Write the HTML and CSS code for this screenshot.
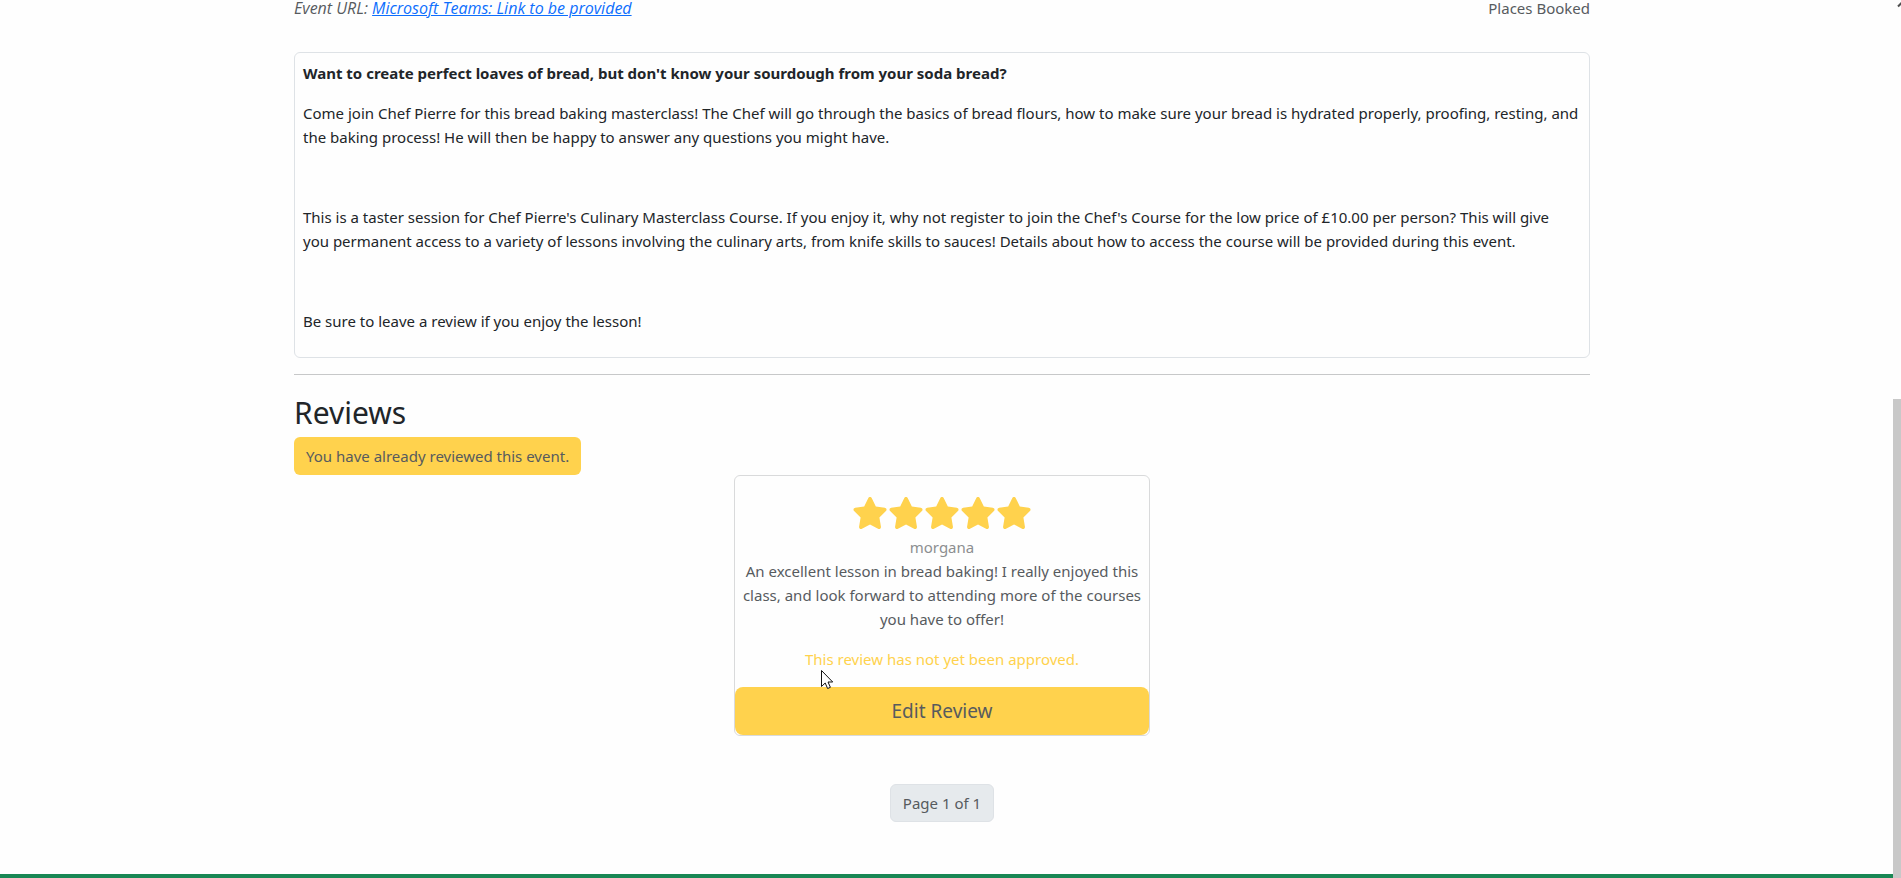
FILE: index.html
```html
<!DOCTYPE html>
<html lang="en">
<head>
<meta charset="utf-8">
<meta name="viewport" content="width=device-width, initial-scale=1">
<title>Bread Baking Masterclass</title>
<link rel="stylesheet" href="styles.css">
</head>
<body>
<svg class="sprite" aria-hidden="true">
  <symbol id="star" viewBox="0 0 576 512">
    <path d="M316.900 18C311.600 7 300.400 0 288.100 0s-23.400 7-28.800 18L195 150.300 51.400 171.500c-12 1.800-22 10.200-25.700 21.700s-.7 24.200 7.900 32.700L137.800 329 113.200 474.700c-2 12 3 24.200 12.900 31.300s23 8 33.800 2.300l128.300-68.500 128.300 68.500c10.800 5.700 23.900 4.900 33.800-2.300s14.900-19.300 12.900-31.300L438.500 329 542.700 225.900c8.600-8.500 11.700-21.200 7.900-32.700s-13.700-19.900-25.700-21.700L381.200 150.300 316.900 18z"/>
  </symbol>
</svg>
<div class="page">
  <main class="container">
    <div class="event-meta">
      <em>Event URL: <a href="#">Microsoft Teams: Link to be provided</a></em>
      <span>Places Booked</span>
    </div>
    <section class="description">
      <p><strong>Want to create perfect loaves of bread, but don't know your sourdough from your soda bread?</strong></p>
      <p>Come join Chef Pierre for this bread baking masterclass! The Chef will go through the basics of bread flours, how to make sure your bread is hydrated properly, proofing, resting, and the baking process! He will then be happy to answer any questions you might have.</p>
      <p>&nbsp;</p>
      <p>This is a taster session for Chef Pierre's Culinary Masterclass Course. If you enjoy it, why not register to join the Chef's Course for the low price of £10.00 per person? This will give you&nbsp;permanent access to a variety of lessons involving the culinary arts, from knife skills to sauces! Details about how to access the course will be provided during this event.</p>
      <p>&nbsp;</p>
      <p>Be sure to leave a review if you enjoy the lesson!</p>
    </section>
    <hr class="divider">
    <section class="reviews">
      <h2>Reviews</h2>
      <button class="btn" type="button">You have already reviewed this event.</button>
      <article class="review">
        <div class="stars" role="img" aria-label="5 out of 5 stars">
          <svg><use href="#star"/></svg>
          <svg><use href="#star"/></svg>
          <svg><use href="#star"/></svg>
          <svg><use href="#star"/></svg>
          <svg><use href="#star"/></svg>
        </div>
        <div class="author">morgana</div>
        <p class="review-text">An excellent lesson in bread baking! I really enjoyed this class, and look forward to attending more of the courses you have to offer!</p>
        <p class="pending">This review has not yet been approved.</p>
        <button class="btn btn-large" type="button">Edit Review</button>
        <svg class="pointer" viewBox="0 0 12 19" aria-hidden="true">
          <path d="M.5.5V16.500L4.200 13L6.600 18.500L9.400 17.300L7 12H11.700Z" fill="#fff" stroke="#111"/>
        </svg>
      </article>
      <nav class="pagination" aria-label="Review pages">
        <span class="page-label">Page 1 of 1</span>
      </nav>
    </section>
  </main>
  <footer class="footer"></footer>
</div>
<div class="scrollbar" aria-hidden="true">
  <svg class="scroll-arrow" viewBox="0 0 10 8"><path d="M1 6.500L5 2.500L9 6.500" fill="none" stroke="#505050" stroke-width="2"/></svg>
  <div class="thumb"></div>
</div>
</body>
</html>
```
FILE: styles.css
```css
*, *::before, *::after { box-sizing: border-box; }

body {
  margin: 0;
  height: 100vh;
  overflow: hidden;
  display: grid;
  grid-template-columns: 1fr 8px;
  background: #fefefe;
  color: #212529;
  font-family: "Noto Sans", "Open Sans", sans-serif;
  font-size: 15px;
  line-height: 24px;
}

p, h2 { margin: 0; }

.sprite { display: none; }

.page {
  display: flex;
  flex-direction: column;
  min-height: 100vh;
}

.container {
  flex: 1;
  width: calc(100% - 9px);
  max-width: 1320px;
  margin-left: max(0px, calc((100% - 1329px) / 2));
  padding: 0 12px;
}

.event-meta {
  display: flex;
  justify-content: space-between;
  margin-bottom: 36px;
  line-height: 16px;
  color: #575b5e;
}

.event-meta em {
  font-family: "Open Sans", "Noto Sans", sans-serif;
  font-size: 16px;
}

.event-meta a { color: #0d6efd; }

.description {
  display: flex;
  flex-direction: column;
  gap: 16px;
  padding: 8px 8px 24px;
  border: 1px solid #dee2e6;
  border-radius: 6px;
}

.divider {
  margin: 16px 0;
  border: 0;
  border-top: 1px solid #c7c8c9;
}

.reviews {
  display: flex;
  flex-direction: column;
  align-items: flex-start;
}

.reviews h2 {
  margin-bottom: 2px;
  font-size: 30px;
  font-weight: 400;
  line-height: 44px;
}

.btn {
  padding: 7px 12px;
  border: 0;
  border-radius: 6px;
  background: #ffd24d;
  color: #575b5e;
  font: inherit;
}

.btn-large {
  padding: 8px 16px;
  border-radius: 8px;
  font-size: 19px;
  line-height: 32px;
}

.review {
  position: relative;
  align-self: center;
  display: flex;
  flex-direction: column;
  width: 416px;
  max-width: 100%;
  border: 1px solid #d9dadb;
  border-radius: 6px;
  text-align: center;
  color: #575b5e;
}

.stars {
  display: flex;
  justify-content: center;
  padding: 21px 0 6px;
}

.stars svg {
  width: 36px;
  height: 32px;
  fill: #ffd24d;
}

.author { color: #8c8e90; }

.review-text { padding: 0 4px; }

.pending {
  margin: 16px 0;
  color: #ffd24d;
}

.pointer {
  position: absolute;
  left: 86px;
  top: 194px;
  width: 12px;
  height: 19px;
}

.pagination {
  align-self: center;
  margin: 48px 0;
}

.page-label {
  display: block;
  padding: 6px 12px;
  border: 1px solid #dee2e6;
  border-radius: 6px;
  background: #e6eaed;
  color: #575b5e;
}

.footer {
  height: 4px;
  background: #198754;
}

.scrollbar {
  display: flex;
  flex-direction: column;
  justify-content: space-between;
  height: 100vh;
  overflow: hidden;
}

.scroll-arrow {
  flex: none;
  width: 10px;
  height: 8px;
  margin-left: 4px;
}

.thumb {
  height: calc(100vh - 399px);
  background: #c8c8c8;
}
```
